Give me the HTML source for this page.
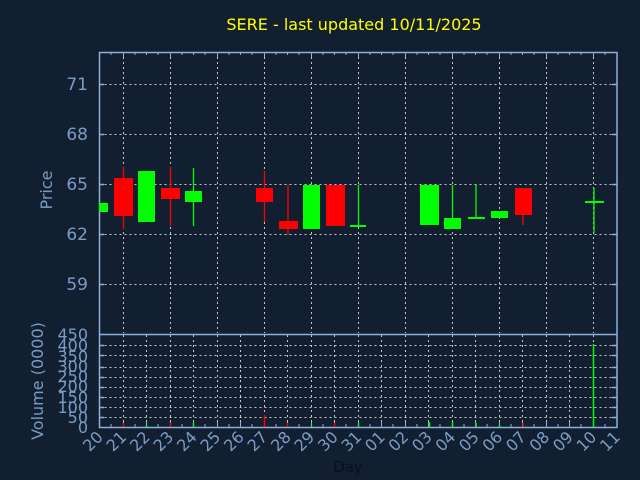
<!DOCTYPE html>
<html><head><style>
html,body{margin:0;padding:0;background:#111f30;}
svg{display:block;font-family:"DejaVu Sans","Liberation Sans",sans-serif;}
</style></head><body>
<svg width="640" height="480" viewBox="0 0 640 480" xmlns="http://www.w3.org/2000/svg">
<rect width="640" height="480" fill="#111f30"/>
<text x="354" y="30" fill="#ffff00" font-size="16" text-anchor="middle">SERE - last updated 10/11/2025</text>
<g stroke="#c8c8c8" stroke-width="1" stroke-dasharray="2,3" fill="none">
<path d="M99.5 84.5H617M99.5 134.5H617M99.5 184.5H617M99.5 234.5H617M99.5 284.5H617"/>
<path d="M123.5 52V333M170.5 52V333M217.5 52V333M264.5 52V333M311.5 52V333M358.5 52V333M405.5 52V333M452.5 52V333M499.5 52V333M546.5 52V333M593.5 52V333"/>
<path d="M99.5 345.5H617M99.5 355.5H617M99.5 367.5H617M99.5 377.5H617M99.5 387.5H617M99.5 397.5H617M99.5 407.5H617M99.5 417.5H617"/>
<path d="M123.5 335V427M146.5 335V427M170.5 335V427M193.5 335V427M217.5 335V427M240.5 335V427M264.5 335V427M287.5 335V427M311.5 335V427M334.5 335V427M358.5 335V427M381.5 335V427M405.5 335V427M428.5 335V427M452.5 335V427M475.5 335V427M499.5 335V427M522.5 335V427M546.5 335V427M569.5 335V427M593.5 335V427"/>
</g>
<g stroke="#8fb0d8" stroke-width="1.5" fill="none">
<rect x="99.5" y="52.5" width="517.5" height="282"/>
<path d="M99.5 335V427.5H617V335"/>
<path d="M99 84.5h5M99 134.5h5M99 184.5h5M99 234.5h5M99 284.5h5M612 84.5h5M612 134.5h5M612 184.5h5M612 234.5h5M612 284.5h5"/>
<path d="M99 345.5h5M99 355.5h5M99 367.5h5M99 377.5h5M99 387.5h5M99 397.5h5M99 407.5h5M99 417.5h5M612 345.5h5M612 355.5h5M612 367.5h5M612 377.5h5M612 387.5h5M612 397.5h5M612 407.5h5M612 417.5h5"/>
</g>
<g stroke="#8fb0d8" stroke-width="1" fill="none">
<path d="M111 52v3M123.5 52v5M135 52v3M146.5 52v3M158 52v3M170.5 52v5M182 52v3M193.5 52v3M205 52v3M217.5 52v5M229 52v3M240.5 52v3M252 52v3M264.5 52v5M276 52v3M287.5 52v3M299 52v3M311.5 52v5M323 52v3M334.5 52v3M346 52v3M358.5 52v5M370 52v3M381.5 52v3M393 52v3M405.5 52v5M417 52v3M428.5 52v3M440 52v3M452.5 52v5M464 52v3M475.5 52v3M487 52v3M499.5 52v5M511 52v3M522.5 52v3M534 52v3M546.5 52v5M558 52v3M569.5 52v3M581 52v3M593.5 52v5M605 52v3"/>
<path d="M111 427v-3M123.5 427v-5M135 427v-3M146.5 427v-5M158 427v-3M170.5 427v-5M182 427v-3M193.5 427v-5M205 427v-3M217.5 427v-5M229 427v-3M240.5 427v-5M252 427v-3M264.5 427v-5M276 427v-3M287.5 427v-5M299 427v-3M311.5 427v-5M323 427v-3M334.5 427v-5M346 427v-3M358.5 427v-5M370 427v-3M381.5 427v-5M393 427v-3M405.5 427v-5M417 427v-3M428.5 427v-5M440 427v-3M452.5 427v-5M464 427v-3M475.5 427v-5M487 427v-3M499.5 427v-5M511 427v-3M522.5 427v-5M534 427v-3M546.5 427v-5M558 427v-3M569.5 427v-5M581 427v-3M593.5 427v-5M605 427v-3"/>
</g>
<!-- candles -->
<g stroke-width="1.3">
<rect x="99" y="203" width="9" height="9" fill="#00ff00"/>
<line x1="123.5" y1="167" x2="123.5" y2="229" stroke="#ff0000"/><rect x="114" y="178" width="19" height="38" fill="#ff0000"/>
<rect x="138" y="171" width="17" height="51" fill="#00ff00"/>
<line x1="170.5" y1="167" x2="170.5" y2="226" stroke="#ff0000"/><rect x="161" y="188" width="19" height="11" fill="#ff0000"/>
<line x1="193.5" y1="168" x2="193.5" y2="226" stroke="#00ff00"/><rect x="185" y="191" width="17" height="11" fill="#00ff00"/>
<line x1="264.5" y1="171" x2="264.5" y2="222" stroke="#ff0000"/><rect x="256" y="188" width="17" height="14" fill="#ff0000"/>
<line x1="288" y1="185" x2="288" y2="235" stroke="#ff0000"/><rect x="279" y="221" width="19" height="8" fill="#ff0000"/>
<rect x="303" y="185" width="17" height="44" fill="#00ff00"/>
<rect x="326" y="185" width="19" height="41" fill="#ff0000"/>
<line x1="358.5" y1="185" x2="358.5" y2="227" stroke="#00ff00"/><rect x="350" y="225" width="16" height="2" fill="#00ff00"/>
<rect x="420" y="185" width="19" height="40" fill="#00ff00"/>
<line x1="452.5" y1="185" x2="452.5" y2="229" stroke="#00ff00"/><rect x="444" y="218" width="17" height="11" fill="#00ff00"/>
<line x1="476" y1="185" x2="476" y2="219" stroke="#00ff00"/><rect x="468" y="217" width="17" height="2" fill="#00ff00"/>
<rect x="491" y="211" width="17" height="7" fill="#00ff00"/>
<line x1="523" y1="188" x2="523" y2="225" stroke="#ff0000"/><rect x="515" y="188" width="17" height="27" fill="#ff0000"/>
<line x1="594" y1="188" x2="594" y2="233" stroke="#00ff00"/><rect x="585" y="201" width="19" height="2" fill="#00ff00"/>
</g>
<!-- volume bars -->
<g stroke-width="1.5">
<line x1="123.5" y1="423" x2="123.5" y2="427" stroke="#ff0000"/>
<line x1="146.5" y1="425" x2="146.5" y2="427" stroke="#00ff00"/>
<line x1="170.5" y1="423" x2="170.5" y2="427" stroke="#ff0000"/>
<line x1="193.5" y1="423" x2="193.5" y2="427" stroke="#00ff00"/>
<line x1="264.5" y1="415" x2="264.5" y2="427" stroke="#ff0000"/>
<line x1="287.5" y1="423" x2="287.5" y2="427" stroke="#ff0000"/>
<line x1="311.5" y1="425" x2="311.5" y2="427" stroke="#00ff00"/>
<line x1="334.5" y1="423" x2="334.5" y2="427" stroke="#ff0000"/>
<line x1="358.5" y1="423" x2="358.5" y2="427" stroke="#00ff00"/>
<line x1="429.5" y1="422" x2="429.5" y2="427" stroke="#00ff00"/>
<line x1="452.5" y1="422" x2="452.5" y2="427" stroke="#00ff00"/>
<line x1="476" y1="423" x2="476" y2="427" stroke="#00ff00"/>
<line x1="499.5" y1="425" x2="499.5" y2="427" stroke="#00ff00"/>
<line x1="523" y1="423" x2="523" y2="427" stroke="#ff0000"/>
<line x1="593.5" y1="344" x2="593.5" y2="427" stroke="#00ff00"/>
</g>
<g fill="#7a9cc6" font-size="17" text-anchor="end">
<text x="88" y="90">71</text><text x="88" y="140">68</text><text x="88" y="190">65</text><text x="88" y="240">62</text><text x="88" y="290">59</text>
</g>
<g fill="#7a9cc6" font-size="16" text-anchor="end">
<text x="88" y="340">450</text><text x="88" y="351">400</text><text x="88" y="362">350</text><text x="88" y="372">300</text><text x="88" y="382">250</text><text x="88" y="392">200</text><text x="88" y="403">150</text><text x="88" y="413">100</text><text x="88" y="423">50</text><text x="88" y="433">0</text>
</g>
<text transform="translate(52,190) rotate(-90)" fill="#7a9cc6" font-size="16" text-anchor="middle">Price</text>
<text transform="translate(43,381) rotate(-90)" fill="#7a9cc6" font-size="16" text-anchor="middle">Volume (0000)</text>
<g fill="#7a9cc6" font-size="16" text-anchor="end">
<text transform="translate(104,438) rotate(-45)">20</text>
<text transform="translate(127.5,438) rotate(-45)">21</text>
<text transform="translate(151,438) rotate(-45)">22</text>
<text transform="translate(174.5,438) rotate(-45)">23</text>
<text transform="translate(198,438) rotate(-45)">24</text>
<text transform="translate(221.5,438) rotate(-45)">25</text>
<text transform="translate(245,438) rotate(-45)">26</text>
<text transform="translate(268.5,438) rotate(-45)">27</text>
<text transform="translate(292,438) rotate(-45)">28</text>
<text transform="translate(315.5,438) rotate(-45)">29</text>
<text transform="translate(339,438) rotate(-45)">30</text>
<text transform="translate(362.5,438) rotate(-45)">31</text>
<text transform="translate(386,438) rotate(-45)">01</text>
<text transform="translate(409.5,438) rotate(-45)">02</text>
<text transform="translate(433,438) rotate(-45)">03</text>
<text transform="translate(456.5,438) rotate(-45)">04</text>
<text transform="translate(480,438) rotate(-45)">05</text>
<text transform="translate(503.5,438) rotate(-45)">06</text>
<text transform="translate(527,438) rotate(-45)">07</text>
<text transform="translate(550.5,438) rotate(-45)">08</text>
<text transform="translate(574,438) rotate(-45)">09</text>
<text transform="translate(597.5,438) rotate(-45)">10</text>
<text transform="translate(621,438) rotate(-45)">11</text>
</g>
<text x="348" y="472" fill="#0b1018" font-size="15" text-anchor="middle">Day</text>
</svg>
</body></html>
